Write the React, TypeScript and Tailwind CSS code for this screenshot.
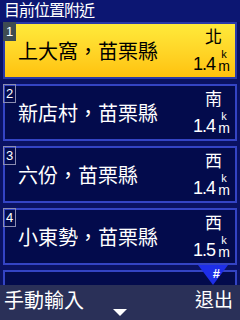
import React from "react"

const font = { fontFamily: '"Liberation Sans", "Noto Sans CJK TC", sans-serif' }

const places = [
  { n: 1, name: "上大窩，苗栗縣", dir: "北", dist: "1.4" },
  { n: 2, name: "新店村，苗栗縣", dir: "南", dist: "1.4" },
  { n: 3, name: "六份，苗栗縣", dir: "西", dist: "1.4" },
  { n: 4, name: "小東勢，苗栗縣", dir: "西", dist: "1.5" },
]

function Row({ p, active }: { p: (typeof places)[0]; active?: boolean }) {
  return (
    <div
      className={`relative h-[57px] shrink-0 flex items-center border-2 ${
        active
          ? "border-[#2a3aa8] bg-gradient-to-b from-[#ffea3a] to-[#ffc20a] text-black"
          : "border-[#3444c4] bg-[#030b4c] text-white"
      }`}
    >
      <div
        className={`absolute left-[-2px] top-[-2px] w-[13px] h-[19px] flex items-center justify-center text-[13px] leading-none ${
          active ? "bg-[#3e4c52] text-white" : "border border-[#8a8cb0] text-white"
        }`}
      >
        {p.n}
      </div>
      <div className="pl-[13px] pt-[2px] text-[20px] leading-none">{p.name}</div>
      <div className="ml-auto mr-[6px] flex flex-col items-end">
        <div className="text-[17px] leading-none mr-[7px] mb-[3px]">{p.dir}</div>
        <div className="flex items-end">
          <span className="text-[18px] leading-none tracking-[-1px]">{p.dist}</span>
          <span className="flex flex-col items-center ml-[4px] w-[10px]">
            <span className="text-[11px] leading-[10px]">k</span>
            <span className="text-[14px] leading-[14px]">m</span>
          </span>
        </div>
      </div>
    </div>
  )
}

export default function App() {
  return (
    <div className="w-[240px] h-[320px] overflow-hidden flex flex-col bg-[#0a1262]" style={font}>
      <div className="h-[22px] shrink-0 bg-[#0c1672] text-white text-[16px] tracking-[-1px] leading-none pl-[4px] pt-[3px]">
        目前位置附近
      </div>
      <div className="relative flex-1 overflow-hidden flex flex-col gap-[5px] px-[3px]">
        {places.map((p) => (
          <Row key={p.n} p={p} active={p.n === 1} />
        ))}
        <div className="h-[57px] shrink-0 border-2 border-[#3444c4] bg-[#030b4c]" />
        <div className="absolute right-[12px] top-[243px] w-0 h-0 border-l-[15px] border-r-[15px] border-t-[20px] border-l-transparent border-r-transparent border-t-[#1e2ee8]" />
        <div className="absolute right-[20px] top-[245px] text-white text-[13px] font-bold leading-none">#</div>
      </div>
      <div className="h-[35px] shrink-0 bg-[#2a3058] text-white flex items-start justify-between pl-[4px] pr-[7px] pt-[6px] relative">
        <span className="text-[20px] leading-none">手動輸入</span>
        <span className="text-[19px] leading-none">退出</span>
        <div className="absolute left-[113px] top-[24px] w-0 h-0 border-l-[7px] border-r-[7px] border-t-[7px] border-l-transparent border-r-transparent border-t-white" />
      </div>
    </div>
  )
}
